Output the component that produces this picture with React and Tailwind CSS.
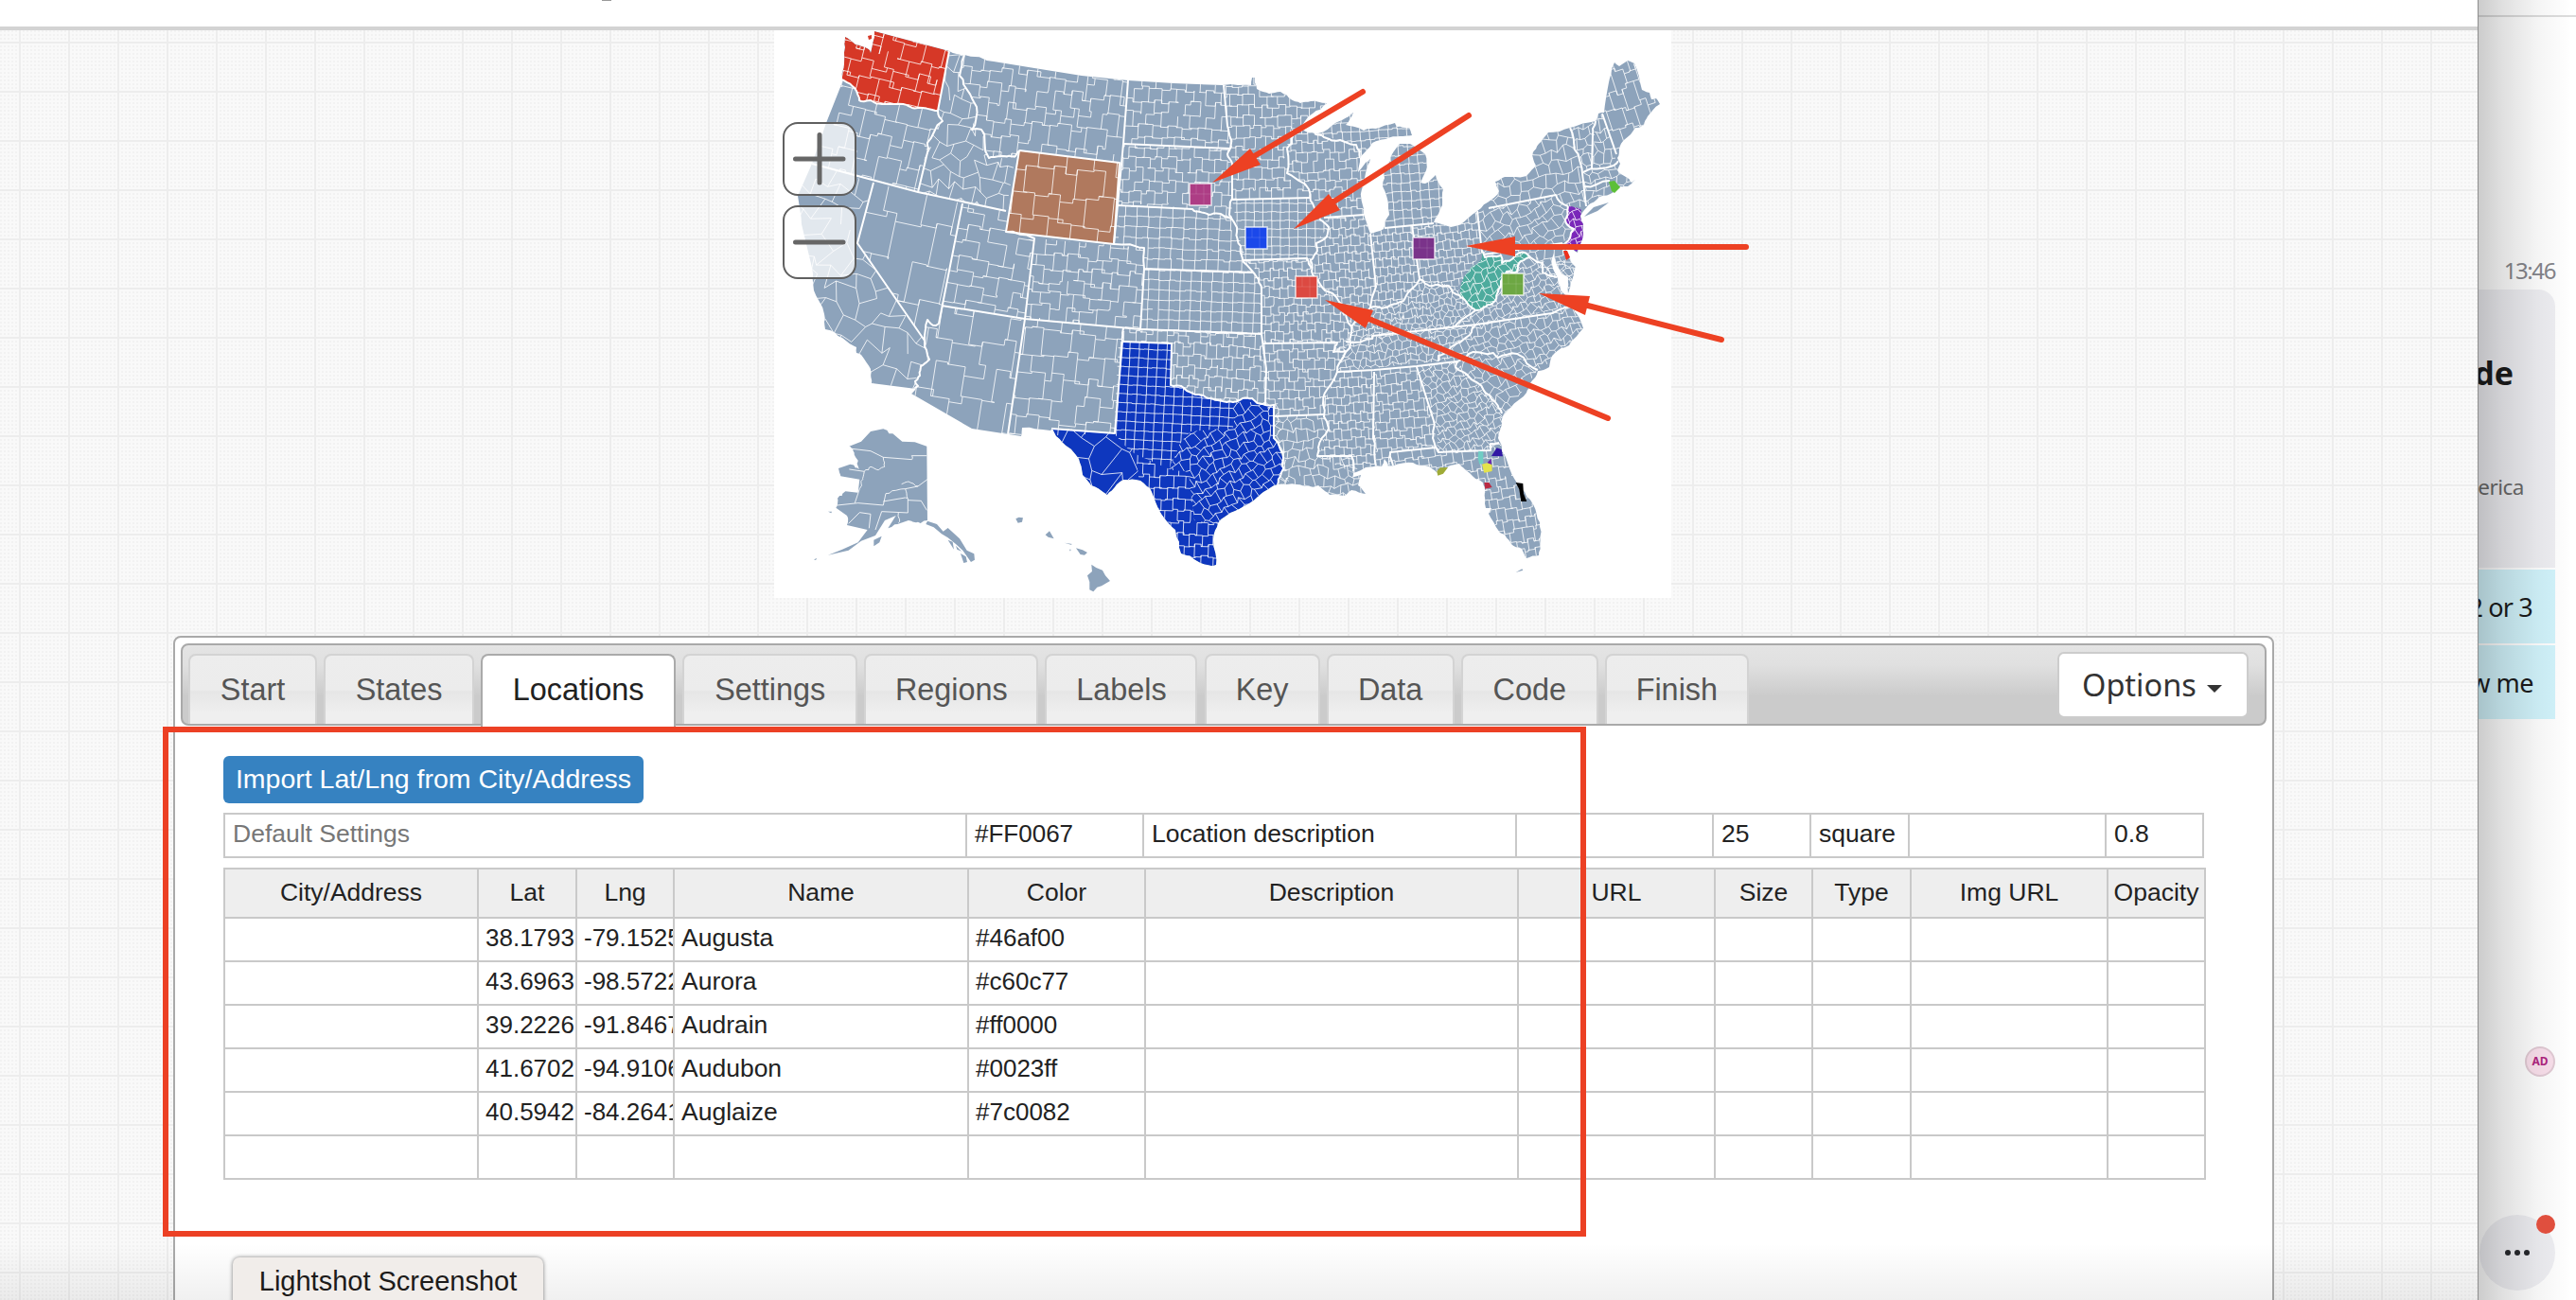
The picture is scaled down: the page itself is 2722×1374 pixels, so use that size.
import React from 'react';

/* ---------- map geometry ---------- */

const hash = (a, b) => {
  const s = Math.sin(a * 12.9898 + b * 78.233) * 43758.5453;
  return s - Math.floor(s) - 0.5;
};

const parse = (s) => s.trim().split(/\s+/).map((p) => p.split(',').map(Number));

// Midpoint displacement gives short segments (rivers, shores) a natural wobble.
const rough = (pts, amp) => {
  let cur = pts;
  for (let level = 0; level < 2; level++) {
    const out = [cur[0]];
    for (let i = 1; i < cur.length; i++) {
      const [x0, y0] = cur[i - 1];
      const [x1, y1] = cur[i];
      const d = Math.hypot(x1 - x0, y1 - y0);
      if (d > 4 && d < 34) {
        const mx = (x0 + x1) / 2;
        const my = (y0 + y1) / 2;
        const k = amp * Math.min(1.6, d / 10);
        out.push([mx + hash(mx, my) * k, my + hash(my, mx) * k]);
      }
      out.push(cur[i]);
    }
    cur = out;
  }
  return cur;
};

const toPath = (pts, close) =>
  'M' + pts.map(([x, y]) => `${x.toFixed(1)} ${y.toFixed(1)}`).join('L') + (close ? 'Z' : '');

const shape = (s, amp = 1.8) => {
  const p = parse(s);
  return toPath(rough([...p, p[0]], amp), true);
};
const line = (s, amp = 2.6) => toPath(rough(parse(s), amp), false);

const COUNTRY = shape(`893,39 904,47 918,52 920,56 924,33 1003,54 1019,58 1050,65 1093,72 1143,80 1192,85 1240,88 1292,90 1322,90 1323,82 1326,82 1328,94 1341,99 1353,97 1364,105 1374,109 1385,107 1402,109 1387,120 1372,135 1378,138 1389,141 1399,139 1418,127 1430,119 1422,132 1441,138 1454,136 1474,130 1476,134 1489,135 1492,143 1479,144 1464,147 1450,151 1443,160 1437,167 1435,182 1440,176 1448,168 1443,183 1439,200 1441,227 1448,247 1462,242 1468,227 1467,217 1461,197 1463,180 1469,170 1471,163 1479,152 1490,152 1506,163 1507,180 1501,193 1506,194 1517,185 1525,200 1524,217 1515,235 1533,240 1544,237 1561,223 1576,211 1584,202 1580,192 1590,187 1613,186 1623,175 1619,163 1626,152 1636,140 1659,135 1686,128 1689,120 1695,119 1700,87 1706,66 1711,70 1720,64 1727,67 1735,95 1743,98 1745,105 1750,104 1754,110 1741,123 1737,132 1728,135 1716,148 1711,157 1709,167 1712,173 1709,180 1718,187 1724,193 1728,190 1720,197 1712,197 1705,203 1690,208 1678,217 1674,222 1670,228 1673,237 1673,250 1667,267 1657,258 1651,257 1659,273 1665,282 1663,290 1657,310 1657,293 1649,287 1644,277 1642,267 1640,280 1644,290 1649,307 1663,327 1667,333 1673,347 1658,365 1643,373 1637,388 1625,392 1617,405 1613,415 1597,430 1587,443 1583,463 1587,477 1595,495 1608,517 1620,533 1627,552 1628,573 1626,587 1613,590 1608,580 1597,575 1590,565 1585,563 1573,543 1576,537 1570,537 1569,520 1567,510 1553,500 1542,490 1530,493 1520,502 1510,493 1493,489 1473,492 1467,493 1463,485 1460,493 1443,494 1430,500 1429,505 1438,502 1435,513 1443,522 1428,518 1420,524 1405,523 1393,513 1387,515 1370,512 1350,512 1335,520 1320,532 1300,542 1287,553 1282,570 1285,597 1280,598 1265,593 1248,585 1242,560 1227,543 1217,520 1205,508 1187,507 1180,512 1170,523 1153,513 1144,502 1140,485 1122,467 1112,453 1110,455 1080,452 1079,461 1027,453 963,416 968,411 921,405 920,390 910,375 905,373 905,367 890,357 872,348 871,332 860,307 858,283 847,237 843,207 858,173 873,130 890,87 892,67 892,45`);

const S = {
  WA: '893,39 904,47 918,52 920,56 924,33 1003,54 991,117 975,114 960,112 946,110 932,110 920,106 908,106 903,93 890,84 892,67 892,45',
  OR: '890,84 903,93 908,106 932,110 960,112 991,117 996,128 980,151 970,203 858,173 840,120',
  CA: '850,171 923,193 906,257 977,360 982,380 973,387 967,403 968,412 830,412 830,200',
  NV: '923,193 1017,215 992,342 980,338 977,360 906,257',
  ID: '1003,54 1019,58 1014,80 1032,113 1027,137 1037,137 1045,167 1073,165 1063,223 970,203 980,151 996,128 991,117',
  MT: '1019,58 1192,85 1183,172 1077,159 1073,165 1045,167 1037,137 1027,137 1032,113 1014,80',
  WY: '1077,159 1183,172 1177,258 1063,245',
  UT: '1017,215 1067,224 1063,245 1093,252 1083,337 995,323',
  CO: '1093,252 1209,262 1205,348 1083,337',
  AZ: '995,323 1083,337 1065,459 960,450 963,416 968,411 967,403 973,387 982,380 977,360 980,338 992,342',
  NM: '1083,337 1187,346 1178,458 1065,462',
  ND: '1192,85 1293,90 1300,157 1187,152',
  SD: '1187,152 1300,157 1302,232 1260,221 1181,217',
  NE: '1181,217 1260,221 1302,232 1311,260 1324,288 1209,284 1209,262 1177,258',
  KS: '1209,284 1324,288 1333,305 1333,353 1205,348',
  OK: '1187,347 1333,353 1338,390 1337,428 1323,421 1303,425 1287,423 1267,417 1237,407 1238,363 1186,361',
  TX: '1186,361 1238,363 1237,407 1251,410 1267,417 1277,421 1287,423 1303,425 1313,421 1323,421 1337,428 1346,428 1346,463 1356,485 1353,503 1350,512 1335,520 1320,532 1300,542 1287,553 1282,570 1285,597 1280,598 1265,593 1248,585 1242,560 1227,543 1217,520 1205,508 1187,507 1180,512 1170,523 1153,513 1144,502 1140,485 1122,467 1112,453 1178,458',
  // Texas is meshed in four parts: square plains, large western, southern and irregular eastern counties
  TXN: '1182,361 1238,363 1237,407 1303,425 1303,452 1258,456 1245,472 1236,496 1200,480 1177,458',
  TXW: '1110,452 1178,457 1200,480 1206,512 1170,530 1130,510',
  TXS: '1200,480 1236,496 1256,500 1262,550 1290,555 1290,600 1240,600 1205,512',
  TXE: '1303,425 1350,425 1362,510 1290,555 1262,550 1256,500 1236,496 1245,472 1258,456 1303,452',
  MN: '1292,80 1410,80 1410,110 1366,137 1365,152 1360,157 1360,183 1383,200 1385,209 1302,211 1302,173',
  IA: '1302,211 1385,209 1389,220 1404,240 1391,257 1385,275 1314,275',
  MO: '1314,275 1385,273 1387,290 1400,307 1420,327 1428,350 1422,371 1409,372 1413,362 1334,363 1333,305',
  AR: '1334,363 1413,362 1422,371 1413,393 1402,412 1399,438 1347,440 1338,428',
  LA: '1347,440 1399,438 1404,453 1392,482 1428,482 1450,530 1350,530 1356,485',
  WI: '1366,130 1399,145 1433,153 1450,170 1441,227 1399,230 1383,200 1360,183 1360,157',
  MI: '1389,141 1430,110 1500,130 1530,170 1530,236 1463,241 1455,170 1437,167 1433,153',
  IL: '1399,230 1441,227 1448,247 1454,303 1448,325 1428,345 1400,307 1387,290 1391,257 1404,240',
  IN: '1448,247 1463,241 1492,238 1500,295 1483,318 1448,325 1454,303',
  OH: '1492,238 1561,223 1566,267 1546,295 1540,303 1500,295',
  KY: '1428,345 1448,325 1483,318 1500,295 1540,303 1559,328 1527,347 1450,358 1422,361',
  TN: '1422,361 1450,356 1560,343 1520,382 1413,393',
  MS: '1413,393 1452,391 1454,500 1430,500 1392,482 1404,453 1398,427',
  AL: '1452,391 1497,387 1515,445 1517,473 1469,478 1472,500 1454,500',
  GA: '1497,387 1540,382 1587,437 1590,470 1575,476 1520,478 1515,445',
  FL: '1469,478 1517,473 1575,476 1590,465 1660,600 1560,600 1460,505',
  SC: '1540,382 1578,373 1603,374 1625,391 1587,443',
  NC: '1560,343 1667,322 1690,350 1625,391 1603,374 1578,373 1540,382 1520,382',
  VA: '1527,347 1559,328 1580,318 1592,287 1617,270 1640,280 1670,270 1670,322 1560,343',
  WV: '1566,265 1569,272 1586,270 1587,278 1601,270 1611,267 1617,272 1607,276 1603,287 1592,287 1586,297 1583,308 1580,318 1570,324 1559,328 1550,320 1542,312 1546,295 1554,283 1565,275',
  PA: '1561,223 1573,220 1644,206 1657,218 1654,232 1663,242 1651,257 1567,269',
  MD: '1617,270 1567,269 1651,257 1670,290 1640,295',
  NJ: '1657,218 1671,222 1670,229 1673,237 1673,250 1666,266 1654,257 1663,242 1654,232',
  NY: '1573,220 1570,180 1620,130 1659,135 1672,183 1676,218 1657,218 1644,206',
  VT: '1659,135 1686,128 1682,178 1673,182',
  NH: '1686,128 1693,120 1708,163 1705,175 1682,178',
  ME: '1693,120 1700,60 1760,60 1760,120 1708,163',
  MA: '1673,182 1705,175 1735,180 1735,200 1701,205 1674,218',
};

const FILLS = { WA: '#d63827', WY: '#b0795e', TX: '#0e37be', WV: '#4dab9d', NJ: '#7a27b9' };

// id, cell width, cell height, rotation in degrees, jitter, chance of a missing edge
const ZONES = [
  ['WA', 23, 17, 14, 0.58, 0.1], ['OR', 25, 22, 13, 0.5, 0.12], ['CA', 26, 20, 24, 0.75, 0.12],
  ['NV', 38, 42, 12, 0.45, 0.1], ['ID', 18, 15, 12, 0.8, 0.1], ['MT', 20, 18, 7, 0.58, 0.12],
  ['WY', 27, 27, 6, 0.4, 0.08], ['UT', 28, 16, 10, 0.5, 0.14], ['CO', 18, 14, 5, 0.58, 0.12],
  ['AZ', 34, 32, 9, 0.5, 0.12], ['NM', 25, 23, 6, 0.45, 0.08], ['ND', 15.5, 13, 3, 0.35, 0.1],
  ['SD', 14, 12, 2, 0.4, 0.1], ['NE', 12.5, 11, 2, 0.18, 0.06], ['KS', 11.2, 10.5, 2, 0.12, 0.02],
  ['OK', 11.5, 11.5, 2, 0.5, 0.08], ['TXN', 9.8, 9.6, 3, 0.08, 0], ['TXW', 26, 24, 30, 0.7, 0.05],
  ['TXS', 13, 12, 2, 0.3, 0.04], ['TXE', 9.8, 9.4, -32, 0.65, 0],
  ['MN', 12.5, 11, 0, 0.4, 0.08], ['IA', 9.2, 9, 0, 0.1, 0],
  ['MO', 9.8, 9.4, -1, 0.45, 0.04], ['AR', 10.6, 10, -1, 0.5, 0.04], ['LA', 10.5, 10, -2, 0.7, 0.04],
  ['WI', 11.2, 10.2, -2, 0.45, 0.06], ['MI', 9.8, 9.6, -4, 0.2, 0], ['IL', 9, 9, -3, 0.45, 0.04],
  ['IN', 8, 8.6, -4, 0.35, 0], ['OH', 8.4, 8.4, -6, 0.4, 0], ['KY', 6.6, 6.8, -8, 0.8, 0],
  ['TN', 7.8, 7.4, -6, 0.75, 0], ['MS', 9.4, 9, -3, 0.45, 0], ['AL', 10.5, 9.6, -5, 0.55, 0],
  ['GA', 7.4, 7.4, -28, 0.75, 0], ['FL', 12, 11.5, -9, 0.5, 0.05], ['SC', 10, 9.6, -35, 0.65, 0],
  ['NC', 8.6, 8.6, -22, 0.65, 0], ['VA', 7.6, 7.4, -32, 0.8, 0], ['WV', 8.4, 8.2, -35, 0.7, 0],
  ['PA', 10.6, 9.6, -32, 0.65, 0], ['MD', 10, 8, -12, 0.6, 0], ['NJ', 7.5, 8, -30, 0.6, 0],
  ['NY', 12.5, 12, -12, 0.6, 0], ['VT', 10, 10, -10, 0.6, 0], ['NH', 10, 11, -15, 0.6, 0],
  ['ME', 14, 20, -18, 0.55, 0], ['MA', 11, 9, -12, 0.6, 0],
];

function mesh(id, w, h, deg, jitter, gap) {
  const pts = parse(S[id]);
  const xs = pts.map((p) => p[0]);
  const ys = pts.map((p) => p[1]);
  const x0 = Math.min(...xs), x1 = Math.max(...xs), y0 = Math.min(...ys), y1 = Math.max(...ys);
  const cx = (x0 + x1) / 2, cy = (y0 + y1) / 2;
  const R = Math.hypot(x1 - x0, y1 - y0) / 2 + w;
  const a = (deg * Math.PI) / 180;
  const nc = Math.ceil((R * 2) / (w / 2)), nr = Math.ceil(R / h);
  const inBox = ([x, y]) => x > x0 - w && x < x1 + w && y > y0 - h && y < y1 + h;
  const local = (r, k) => [
    k * (w / 2) + hash(r * 7 + cx, k * 3 + cy) * w * jitter * 0.6,
    r * h + hash(k * 5 + cy, r * 11 + cx) * h * jitter,
  ];
  const world = ([lx, ly]) => [cx + lx * Math.cos(a) - ly * Math.sin(a), cy + lx * Math.sin(a) + ly * Math.cos(a)];
  let d = '';
  const chain = (...ps) => {
    const q = ps.map(world);
    if (q.some(inBox)) d += toPath(q, false);
  };
  const brick = jitter >= 0.3;
  const stepped = jitter < 0.6; // surveyed counties run in right-angled steps
  for (let r = -nr; r <= nr; r++) {
    for (let k = -nc; k <= nc; k++) {
      const p = local(r, k);
      const right = local(r, k + 1);
      const below = local(r + 1, k);
      if (hash(r + 0.3 + cx, k + 0.7) + 0.5 >= gap) {
        if (stepped) chain(p, [right[0], p[1]], right);
        else chain(p, right);
      }
      const odd = brick ? Math.abs(r) % 2 : 0;
      if (Math.abs(k) % 2 === odd) {
        if (stepped) chain(p, [p[0], below[1]], below);
        else chain(p, below);
      }
    }
  }
  return d;
}

const BORDERS = [
  '1003,54 991,117 996,128 980,151 981,157 970,203',
  '890,84 903,93 908,106 920,106 932,110 946,110 960,112 975,114 991,117',
  '858,173 970,203 1063,223',
  '923,193 906,257 977,360 982,380 973,387 972,397 967,403 970,408 963,416',
  '1017,215 992,342 989,344 980,338 977,360',
  '995,323 1083,337 1205,348 1333,353',
  '1019,58 1014,80 1020,92 1032,113 1027,137 1037,137 1045,167 1060,165 1073,165 1077,159',
  '1077,159 1183,172 1177,258 1063,245 1077,159',
  '1192,85 1187,152 1181,217 1177,258',
  '1187,152 1300,157',
  '1181,217 1260,221 1268,224 1277,227 1290,226 1302,232 1307,245 1311,260 1314,277 1328,293 1333,305 1333,353 1338,390 1337,428',
  '1177,258 1209,262 1209,284 1324,288',
  '1209,284 1205,348', '1063,245 1093,252 1083,337 1065,459', '1187,347 1186,361 1178,458 1111,453',
  '1186,361 1238,363 1237,407 1251,410 1267,417 1277,421 1287,423 1303,425 1313,421 1323,421 1337,428 1346,428 1346,463 1356,485 1353,503 1350,512',
  '1334,363 1413,362 1409,372 1422,371', '1347,440 1399,438',
  '1366,137 1365,152 1360,157 1360,183 1383,200 1389,220 1395,232 1404,240 1402,250 1391,257 1391,267 1385,275 1387,290 1400,307 1408,310 1420,327 1428,345 1428,352 1422,372 1413,393 1402,412 1398,427 1404,453 1393,473 1392,482 1428,482 1430,498',
  '1293,90 1297,133 1300,157 1297,163 1302,173 1302,210 1299,227 1302,232',
  '1302,211 1385,209', '1314,275 1381,273 1387,283', '1399,230 1441,227',
  '1389,141 1399,145 1416,148 1433,153 1437,167', '1448,247 1454,303 1448,325',
  '1428,345 1448,325 1460,326 1471,322 1483,318 1490,307 1500,295 1510,302 1520,301 1531,302 1542,312 1550,320 1559,328 1540,342 1527,347',
  '1492,238 1500,295', '1463,241 1515,236', '1561,223 1566,267', '1567,269 1651,257',
  '1573,220 1644,206 1657,218', '1659,135 1664,158 1672,183 1676,218', '1686,128 1683,142 1682,178',
  '1673,182 1705,175 1710,170', '1674,197 1701,191', '1693,120 1708,163',
  '1617,272 1630,278 1630,288 1645,293', '1422,361 1450,358 1450,355 1560,343 1633,332 1663,324',
  '1413,393 1452,391 1497,387 1540,382', '1560,343 1553,354 1533,367 1520,376 1520,382',
  '1540,382 1552,374 1578,373 1583,378 1603,374 1625,391', '1540,382 1538,388 1552,398 1568,413 1580,425 1587,437',
  '1452,393 1451,463 1454,493', '1497,388 1515,445 1514,463 1520,478',
  '1472,492 1469,478 1517,473 1520,478 1575,476 1575,469 1584,468',
  '1566,265 1569,272 1586,270 1587,278 1601,270 1611,267 1617,272 1607,276 1603,287 1592,287 1586,297 1583,308 1580,318 1570,324 1559,328',
  '1657,218 1654,232 1663,242 1654,257 1652,266',
];

const ALASKA = shape('370,370 400,385 430,410 470,412 508,425 510,660 480,665 450,660 415,672 385,685 410,645 375,660 345,708 300,725 260,755 195,770 240,752 290,730 320,690 255,675 255,645 220,620 225,590 250,568 290,572 295,530 235,520 228,495 265,482 293,498 290,470 275,440 262,425 300,410 330,378', 6);

const ALASKA_LINES = [
  '270,433 330,440 370,460 460,467 460,455 508,455', '370,460 374,490 355,500 330,490 310,505 262,498',
  '310,505 305,530 295,560 280,605', '225,612 290,605 370,612 378,575 410,565 440,560 480,552 510,530',
  '428,545 450,537 480,552', '370,600 440,588 448,590 448,636 365,632 345,690', '448,596 490,598 508,628',
  '260,670 295,635 330,640 325,685', '418,636 418,668', '440,560 446,590',
];

const ARROWS = [
  ['1440,97 1322,167', '1281,193 1321,157 1332,174'],
  ['1552,122 1408,214', '1367,242 1404,205 1416,222'],
  ['1845,261 1598,261', '1549,260 1601,250 1601,271'],
  ['1819,359 1674,322', '1626,310 1680,313 1675,333'],
  ['1699,442 1444,336', '1400,317 1451,328 1443,347'],
];

const MARKERS = [
  [1257, 194, '#ad3d85'], [1316, 240, '#1b48ea'], [1369, 292, '#dc4941'], [1493, 251, '#7a338a'], [1587, 289, '#6da743'],
];

function UsMap() {
  return (
    <svg className="block h-[600px] w-[948px]" viewBox="818 32 948 600">
      <defs>
        <clipPath id="country"><path d={COUNTRY} /></clipPath>
        {ZONES.map(([id]) => (
          <clipPath key={id} id={`zone-${id}`}><path d={shape(S[id])} /></clipPath>
        ))}
      </defs>
      <path d={COUNTRY} fill="#8da3bb" />
      <g clipPath="url(#country)">
        {Object.keys(FILLS).map((id) => <path key={id} d={shape(S[id])} fill={FILLS[id]} />)}
        {ZONES.map((z) => (
          <g key={z[0]} clipPath={`url(#zone-${z[0]})`}>
            <path d={mesh(...z)} fill="none" stroke="#fff" strokeOpacity="0.8" strokeWidth="1" />
          </g>
        ))}
        <g fill="none" stroke="#fff" strokeWidth="2" strokeLinejoin="round">
          {BORDERS.map((b) => <path key={b} d={line(b)} />)}
        </g>
      </g>
      <path d="M1674 229L1684 219L1700 214L1688 223Z" fill="#8da3bb" />
      <path d="M917 38l4 -1l0 4l-3 1z" fill="#d63827" />
      <path d="M1700 192L1706 191L1712 198L1706 204L1703 202Z" fill="#5cbf38" />
      <path d="M1652 265L1656 265L1659 272L1655 275Z" fill="#ee2f1c" />
      <g transform="translate(1280 330) scale(.3333)">
        <path d="M847 440L862 442L862 480L850 482L845 462Z" fill="#70cdc4" />
        <path d="M715 505L725 493L750 492L735 512L718 518Z" fill="#9fab36" />
        <path d="M905 430L920 435L924 457L888 456Z" fill="#3118a4" />
        <path d="M874 478L887 464L888 483Z" fill="#6a21ab" />
        <path d="M858 482L874 478L890 484L890 504L865 509Z" fill="#e4e34b" />
        <path d="M865 540L880 540L890 555L868 560Z" fill="#bb2a42" />
        <path d="M965 540L988 543L990 575L1000 600L982 600L976 562Z" fill="#000" />
        <path d="M965 825L985 814L988 818Z" fill="#8da3bb" />
      </g>
      <g transform="translate(810 330) scale(.3333)" fill="#8da3bb">
        <path d={ALASKA} />
        <path d="M510 662L540 672L560 695L575 684L612 718L635 755L658 766L660 785L648 792L622 755L600 735L575 715L555 703L530 682L505 672Z" />
        <path d="M575 722L590 728L594 752ZM600 740L618 758L604 752ZM615 765L632 775L636 792L625 795ZM340 722L365 710L358 730L340 742ZM150 784l10 -4l-4 6zM195 632l12 0l-2 5zM166 532l10 4zM178 538l10 8z" />
        <g fill="none" stroke="#fff" strokeOpacity=".85" strokeWidth="3">
          {ALASKA_LINES.map((l) => <path key={l} d={line(l, 5)} />)}
        </g>
        <path d="M790 655L800 650L813 652L810 665L797 668ZM884 706L897 694L911 718L893 713ZM945 731l24 4l-4 2zM960 752l5 0l-2 6zM981 748L1002 754L1017 762L1008 770L995 768ZM1030 800L1045 810L1065 818L1074 835L1089 852L1062 868L1048 872L1036 886L1024 880L1024 855L1017 835L1032 822Z" />
      </g>
      {MARKERS.map(([x, y, fill]) => (
        <g key={x}>
          <rect x={x} y={y} width="23" height="23" fill={fill} stroke="#fff" strokeOpacity=".75" strokeWidth="1.6" />
          <path d={`M${x + 7} ${y + 1}v10M${x + 15} ${y + 1}v21M${x + 1} ${y + 11}h21`} stroke="#fff" strokeOpacity=".13" fill="none" />
        </g>
      ))}
    </svg>
  );
}

/* ---------- editor ---------- */

const TABS = [
  ['Start', 'w-[136px]'], ['States', 'w-[159px]'], ['Locations', 'w-[206px]'], ['Settings', 'w-[185px]'],
  ['Regions', 'w-[184px]'], ['Labels', 'w-[161px]'], ['Key', 'w-[122px]'], ['Data', 'w-[135px]'],
  ['Code', 'w-[145px]'], ['Finish', 'w-[152px]'],
];

const HEAD = ['City/Address', 'Lat', 'Lng', 'Name', 'Color', 'Description', 'URL', 'Size', 'Type', 'Img URL', 'Opacity'];
const ROWS = [
  ['', '38.1793', '-79.1525', 'Augusta', '#46af00'],
  ['', '43.6963', '-98.5722', 'Aurora', '#c60c77'],
  ['', '39.2226', '-91.8467', 'Audrain', '#ff0000'],
  ['', '41.6702', '-94.9106', 'Audubon', '#0023ff'],
  ['', '40.5942', '-84.2641', 'Auglaize', '#7c0082'],
  [],
];
const DEFAULTS = ['Default Settings', '#FF0067', 'Location description', '', '25', 'square', '', '0.8'];

function Tabs() {
  return (
    <div className="mx-[6px] mt-[6px] flex h-[87px] shrink-0 rounded-[8px] border-2 border-[#a9a9a9] bg-[linear-gradient(#e4e4e4_0%,#e0e0e0_25%,#cbcbcb_65%,#cbcbcb_100%)] pl-[6px] pt-[9px]">
      {TABS.map(([name, w]) => (
        <div
          key={name}
          className={`${w} mr-[7.1px] flex shrink-0 items-center justify-center rounded-t-[8px] border-2 border-b-0 text-[32.4px] ${
            name === 'Locations'
              ? 'relative h-[77px] border-[#aaa] bg-white pb-[3px] text-[#212121]'
              : 'h-[74px] border-[#d3d3d3] bg-[linear-gradient(#ededed_0%,#ececec_50%,#e6e6e6_53%,#efefef_85%,#efefef_100%)] text-[#555]'
          }`}
        >
          {name}
        </div>
      ))}
      <div className="ml-auto mr-[17px] -mt-[2px] flex h-[70px] w-[202px] items-center rounded-[7px] border-2 border-[#ccc] bg-white pl-[24px] font-['Noto_Sans'] text-[32.5px] text-[#333]">
        Options
        <span className="ml-[11px] mt-[7px] border-x-[8px] border-t-[8px] border-x-transparent border-t-[#333]" />
      </div>
    </div>
  );
}

function Editor() {
  return (
    <div className="ml-[183px] mt-10 flex h-[760px] w-[2220px] flex-col rounded-[8px] border-2 border-[#a9a9a9] bg-white">
      <Tabs />
      <div className="pl-[51px] pt-[32px] text-[26.5px] text-[#222]">
        <div className="flex h-[50px] w-[444px] items-center justify-center whitespace-nowrap rounded-[6px] bg-[#3682c1] pb-[2px] text-[28.5px] text-white">
          Import Lat/Lng from City/Address
        </div>
        <div className="mt-[10px] grid h-[48px] w-[2093px] grid-cols-[782px_187px_394px_208px_103px_104px_208px_103px] border-2 border-[#c9c9c9]">
          {DEFAULTS.map((t, i) => (
            <div
              key={i}
              className={`flex items-center overflow-hidden whitespace-nowrap pb-[3px] pl-[8px] ${i ? 'border-l-2 border-[#c9c9c9]' : 'text-[#777]'} ${i === 1 ? 'text-[26px]' : ''}`}
            >
              {t}
            </div>
          ))}
        </div>
        <div className="mt-[10px] w-[2095px] border-b-2 border-r-2 border-[#c9c9c9]">
          <div className="grid h-[52px] grid-cols-[268px_104px_103px_311px_187px_394px_208px_103px_104px_208px_103px] bg-[#eee]">
            {HEAD.map((t) => (
              <div key={t} className="flex items-center justify-center whitespace-nowrap border-l-2 border-t-2 border-[#c9c9c9] pb-px">{t}</div>
            ))}
          </div>
          {ROWS.map((row, r) => (
            <div key={r} className="grid h-[46px] grid-cols-[268px_104px_103px_311px_187px_394px_208px_103px_104px_208px_103px]">
              {HEAD.map((h, i) => (
                <div
                  key={h}
                  className={`flex items-center overflow-hidden whitespace-nowrap border-l-2 border-t-2 border-[#c9c9c9] pb-[3px] pl-[7px] ${i === 3 ? '' : 'text-[26px]'}`}
                >
                  {row[i]}
                </div>
              ))}
            </div>
          ))}
        </div>
      </div>
    </div>
  );
}

function ZoomButton({ plus }) {
  return (
    <div className="flex size-[78px] items-center justify-center rounded-[16px] border-2 border-[#606060] bg-white/75">
      <svg className="size-[60px]" viewBox="0 0 60 60" stroke="#666" strokeWidth="5" strokeLinecap="round">
        <path d={plus ? 'M4.500 30H55M30 4.500V55' : 'M4.500 30H55'} />
      </svg>
    </div>
  );
}

function ChatSidebar() {
  return (
    <div className="relative flex h-full w-[104px] flex-col items-stretch overflow-hidden bg-white pr-[22px] font-['Noto_Sans'] text-[#1b1b1b]">
      <div className="-mr-[22px] h-[18px] shrink-0 border-b-2 border-[#dcdcdc]" />
      <div className="mt-[251px] flex h-[37px] shrink-0 justify-end text-[24px] leading-[34px] tracking-[-1.4px] text-[#85858b]">13:46</div>
      <div className="flex h-[294px] shrink-0 flex-col items-end rounded-tr-[18px] bg-[#efeff3] pt-[65px]">
        <div className="mr-[44px] text-[34px] font-bold leading-[46px]">de</div>
        <div className="mr-[33px] mt-[82px] text-[22.5px] leading-[32px] tracking-[-0.5px] text-[#6a6a6a]">erica</div>
      </div>
      <div className="mt-[2px] flex h-[78px] shrink-0 items-center justify-end whitespace-nowrap bg-[#d2f4fc] pr-[24px] pt-[2px] text-[27px] tracking-[-0.8px]">2 or 3</div>
      <div className="mt-[2px] flex h-[78px] shrink-0 items-center justify-end whitespace-nowrap bg-[#d2f4fc] pr-[23px] pt-[2px] text-[27px] tracking-[-0.5px]">w me</div>
      <div className="ml-auto mt-[346px] flex size-[32px] shrink-0 items-center justify-center rounded-full border-2 border-[#e2cbd5] bg-[#fae0ec] text-[12px] font-bold text-[#b02680]">AD</div>
      <div className="relative ml-[2px] mt-[146px] flex size-[80px] shrink-0 items-center justify-center gap-[4px] rounded-full bg-[#efeff3]">
        <span className="size-[6px] rounded-full bg-[#26282c]" />
        <span className="size-[6px] rounded-full bg-[#26282c]" />
        <span className="size-[6px] rounded-full bg-[#26282c]" />
      </div>
      <div className="absolute inset-0 border-l border-[#8f8f8f] bg-[linear-gradient(90deg,rgba(0,0,0,0.2)_0%,rgba(0,0,0,0.12)_25%,rgba(0,0,0,0.045)_60%,transparent_95%)]" />
      <div className="absolute right-[22px] top-[1284px] size-[20px] rounded-full bg-[#e04f3e]" />
    </div>
  );
}

export default function App() {
  return (
    <div className="relative flex h-[1374px] w-[2722px] overflow-hidden bg-white font-['Liberation_Sans',sans-serif]">
      <div className="relative flex h-full w-[2618px] flex-col overflow-hidden">
        <div className="h-8 shrink-0 border-b-4 border-[#d3d3d3] bg-white">
          <div className="ml-[636px] h-px w-[10px] bg-[#9a9a9a]" />
        </div>
        <div className="relative flex-1 bg-[#f9f9f9] bg-[image:linear-gradient(#ededed_2px,transparent_2px),linear-gradient(90deg,#ededed_2px,transparent_2px),conic-gradient(from_270deg_at_2px_2px,#f2f2f2_90deg,transparent_0deg)] bg-[size:52px_52px,52px_52px,4px_4px] bg-[position:0px_12px,20px_0px,0px_0px]">
          <div className="relative ml-[818px] h-[600px] w-[948px] bg-white">
            <UsMap />
            <div className="absolute left-[9px] top-[97px] flex flex-col gap-[10px]">
              <ZoomButton plus />
              <ZoomButton />
            </div>
          </div>
          <Editor />
        </div>
        <div className="absolute inset-x-0 bottom-0 h-[60px] bg-[linear-gradient(transparent,rgba(0,0,0,0.06))]" />
        <div className="absolute left-[172px] top-[768px] h-[539px] w-[1504px] border-[6px] border-[#ec4024]" />
        <svg className="absolute left-0 top-0 h-[600px] w-[2000px]" viewBox="0 0 2000 600">
          {ARROWS.map(([shaft, head]) => (
            <g key={head} fill="#ed4123">
              <polyline points={shaft} fill="none" stroke="#ed4123" strokeWidth="6" strokeLinecap="round" />
              <polygon points={head} />
            </g>
          ))}
        </svg>
        <div className="absolute left-[246px] top-[1329px] h-[60px] w-[328px] rounded-[7px] bg-[#f1edea] pt-[9px] text-center text-[29px] leading-[32px] text-[#1d1b1a] shadow-[0_0_4px_rgba(0,0,0,0.5)]">
          Lightshot Screenshot
        </div>
      </div>
      <ChatSidebar />
    </div>
  );
}
